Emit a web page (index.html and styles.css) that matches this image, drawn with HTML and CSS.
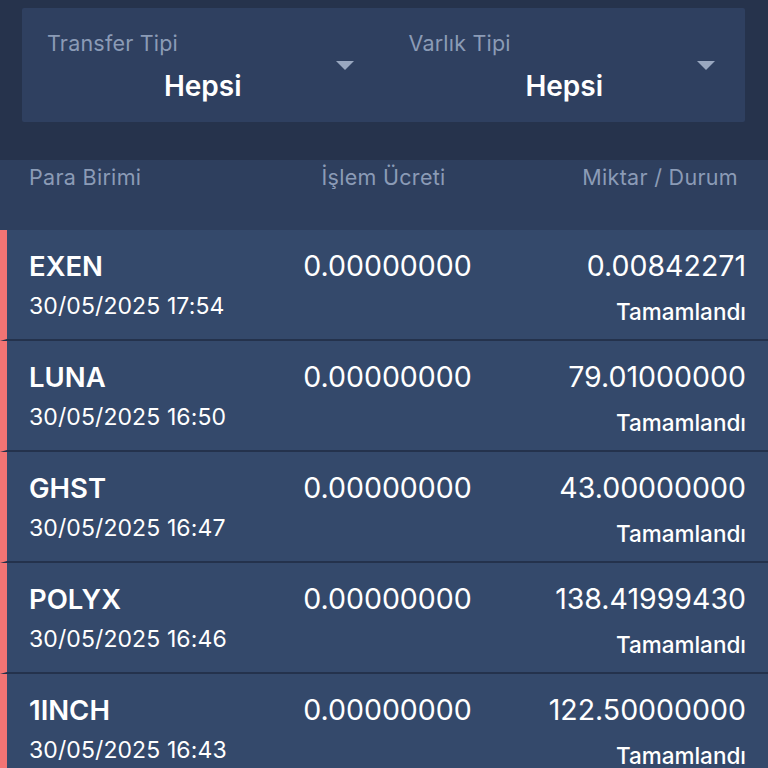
FILE: index.html
```html
<!DOCTYPE html>
<html lang="tr">
<head>
<meta charset="utf-8">
<title>Transferler</title>
<link rel="stylesheet" href="styles.css">
</head>
<body>
<div class="filters">
  <div class="card">
    <div class="select">
      <div class="label">Transfer Tipi</div>
      <div class="value">Hepsi</div>
      <span class="caret"></span>
    </div>
    <div class="select">
      <div class="label">Varlık Tipi</div>
      <div class="value">Hepsi</div>
      <span class="caret"></span>
    </div>
  </div>
</div>
<div class="thead">
  <div class="th left">Para Birimi</div>
  <div class="th mid">İşlem Ücreti</div>
  <div class="th right">Miktar / Durum</div>
</div>
<div class="list">
  <div class="row">
    <div class="c1"><div class="name">EXEN</div><div class="date">30/05/2025 17:54</div></div>
    <div class="c2">0.00000000</div>
    <div class="c3"><div class="amt">0.00842271</div><div class="status">Tamamlandı</div></div>
  </div>
  <div class="row">
    <div class="c1"><div class="name">LUNA</div><div class="date">30/05/2025 16:50</div></div>
    <div class="c2">0.00000000</div>
    <div class="c3"><div class="amt">79.01000000</div><div class="status">Tamamlandı</div></div>
  </div>
  <div class="row">
    <div class="c1"><div class="name">GHST</div><div class="date">30/05/2025 16:47</div></div>
    <div class="c2">0.00000000</div>
    <div class="c3"><div class="amt">43.00000000</div><div class="status">Tamamlandı</div></div>
  </div>
  <div class="row">
    <div class="c1"><div class="name">POLYX</div><div class="date">30/05/2025 16:46</div></div>
    <div class="c2">0.00000000</div>
    <div class="c3"><div class="amt">138.41999430</div><div class="status">Tamamlandı</div></div>
  </div>
  <div class="row">
    <div class="c1"><div class="name">1INCH</div><div class="date">30/05/2025 16:43</div></div>
    <div class="c2">0.00000000</div>
    <div class="c3"><div class="amt">122.50000000</div><div class="status">Tamamlandı</div></div>
  </div>
</div>
</body>
</html>
```
FILE: styles.css
```css
* { box-sizing: border-box; }
html, body {
  margin: 0;
  padding: 0;
  background: #34496b;
  font-family: Inter, "Noto Sans", sans-serif;
  color: #ffffff;
  overflow: hidden;
}
.filters {
  background: #26334c;
  height: 160px;
  padding: 8px 23px 0 22px;
}
.card {
  background: #2f4060;
  height: 114px;
  display: grid;
  grid-template-columns: 1fr 1fr;
  border-radius: 2px;
}
.select {
  position: relative;
  padding: 23px 0 0 25px;
}
.label {
  font-size: 21.5px;
  color: #8b9bb6;
  line-height: 24px;
  letter-spacing: 0.2px;
}
.value {
  text-align: center;
  font-size: 28px;
  font-weight: 600;
  line-height: 34px;
  margin-top: 14px;
  padding-right: 25px;
}
.caret {
  position: absolute;
  right: 30px;
  top: 53px;
  width: 0;
  height: 0;
  border-left: 9px solid transparent;
  border-right: 9px solid transparent;
  border-top: 9px solid #9aa8c0;
}
.thead {
  background: #2e3f5e;
  height: 70px;
  display: grid;
  grid-template-columns: 1fr 240px 1fr;
  padding: 5px 30px 0 29px;
  font-size: 21.5px;
  letter-spacing: 0.3px;
  color: #8b9bb6;
  line-height: 24px;
}
.th.mid { text-align: center; }
.th.right { text-align: right; }
.list { background: #22304a; }
.row {
  height: 111px;
  background: #34496b;
  border-left: 7px solid #f27474;
  border-bottom: 2px solid #24324c;
  display: grid;
  grid-template-columns: 1fr 240px 1fr;
  padding: 19px 22px 0 22px;
}
.name {
  font-size: 27.5px;
  font-weight: 600;
  line-height: 34px;
}
.date {
  font-size: 23px;
  line-height: 28px;
  margin-top: 9px;
  letter-spacing: 0.1px;
}
.c2 {
  text-align: center;
  font-size: 28.5px;
  line-height: 34px;
}
.c3 { text-align: right; }
.amt {
  font-size: 28.5px;
  line-height: 34px;
}
.status {
  font-size: 22.5px;
  font-weight: 500;
  line-height: 28px;
  margin-top: 15px;
}
```
